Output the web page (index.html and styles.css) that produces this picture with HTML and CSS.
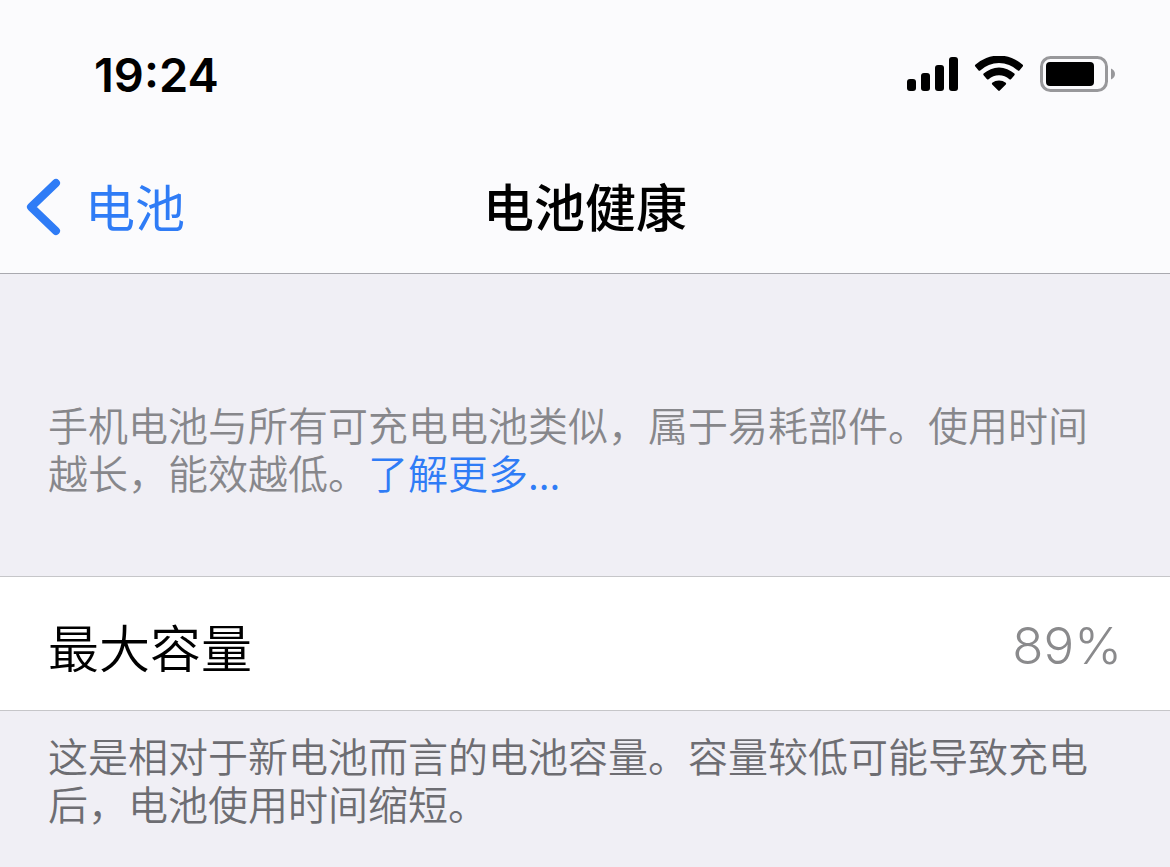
FILE: index.html
```html
<!DOCTYPE html>
<html lang="zh-CN">
	<head>
		<meta charset="utf-8">
		<meta name="viewport" content="width=device-width, initial-scale=1">
		<title>电池健康</title>
		<link rel="stylesheet" href="styles.css">
	</head>
	<body>
		<header class="header">
			<div class="status-bar">
				<time class="clock">19:24</time>
				<div class="status-icons">
					<svg width="51" height="36" viewBox="0 0 51 36" aria-label="信号">
						<rect x="0" y="23" width="9" height="12" rx="3"/>
						<rect x="14" y="17" width="9" height="18" rx="3"/>
						<rect x="28" y="9" width="9" height="26" rx="3"/>
						<rect x="42" y="1" width="9" height="34" rx="3"/>
					</svg>
					<svg width="50" height="36" viewBox="0 0 50 36" aria-label="无线局域网">
						<path d="M1.3 8.8Q0.5 9.6 1.3 10.4L4.6 14.4Q5.4 15.1 6.2 14.4A27.5 27.5 0 0 1 43.8 14.4Q44.6 15.1 45.4 14.4L48.7 10.4Q49.5 9.6 48.7 8.8A35 35 0 0 0 1.3 8.8Z"/>
						<path d="M9.6 17.6Q8.8 18.4 9.6 19.2L13 23.2Q13.8 24 14.6 23.2A15.5 15.5 0 0 1 35.4 23.2Q36.2 24 37 23.2L40.4 19.2Q41.2 18.4 40.4 17.6A22.8 22.8 0 0 0 9.6 17.6Z"/>
						<path d="M18.2 26.8Q17.4 27.7 18.2 28.5L24.2 34.6Q25 35.3 25.8 34.6L31.8 28.5Q32.6 27.7 31.8 26.8A10.8 10.8 0 0 0 18.2 26.8Z"/>
					</svg>
					<svg width="76" height="36" viewBox="0 0 76 36" aria-label="电量">
						<rect class="battery-case" x="1.5" y="1.5" width="65" height="33" rx="9"/>
						<rect x="6" y="6" width="48" height="24" rx="4"/>
						<path class="battery-tip" d="M71 12.5C73.5 13.5 75 15.5 75 18S73.5 22.5 71 23.5Z"/>
					</svg>
				</div>
			</div>
			<nav class="nav-bar">
				<a class="back" href="#">
					<svg width="38" height="58" viewBox="0 0 38 58" aria-hidden="true">
						<path d="M32 3L7 27L32 51"/>
					</svg>
					电池
				</a>
				<h1 class="title">电池健康</h1>
			</nav>
		</header>
		<main>
			<p class="note intro">手机电池与所有可充电电池类似，属于易耗部件。使用时间越长，能效越低。<a href="#">了解更多...</a></p>
			<dl class="row">
				<dt>最大容量</dt>
				<dd>89%</dd>
			</dl>
			<p class="note footnote">这是相对于新电池而言的电池容量。容量较低可能导致充电后，电池使用时间缩短。</p>
		</main>
	</body>
</html>
```

FILE: styles.css
```css
* {
	box-sizing: border-box;
}
body {
	margin: 0;
	background-color: #f0eff5;
	font-family: Inter, "Noto Sans CJK SC", sans-serif;
	color: #000;
}
a {
	color: #2f7cf6;
	text-decoration: none;
}
svg {
	display: block;
}
.header {
	background-color: #fbfbfd;
	border-bottom: 1px solid #a9a9af;
}
.status-bar {
	display: flex;
	justify-content: space-between;
	align-items: center;
	height: 148px;
	padding: 0 54px 0 94px;
}
.clock {
	font-size: 47px;
	font-weight: 600;
}
.status-icons {
	display: flex;
	gap: 16px;
}
.battery-case {
	fill: none;
	stroke: #98989b;
	stroke-width: 3;
}
.battery-tip {
	fill: #98989b;
}
.nav-bar {
	display: grid;
	grid-template-columns: 1fr auto 1fr;
	align-items: center;
	height: 125px;
	padding: 0 24px 4px;
}
.back {
	display: flex;
	align-items: center;
	gap: 23px;
	font-size: 50px;
	line-height: 60px;
}
.back path {
	fill: none;
	stroke: #2f7cf6;
	stroke-width: 8;
	stroke-linecap: round;
	stroke-linejoin: round;
}
.back svg {
	overflow: visible;
}
.title {
	margin: 0;
	font-size: 51px;
	font-weight: 500;
	line-height: 60px;
}
.note {
	margin: 0;
	padding: 0 48px;
	font-family: "Noto Sans CJK SC", sans-serif;
	font-size: 40px;
	font-weight: 350;
	line-height: 48px;
}
.intro {
	padding-top: 126px;
	padding-bottom: 80px;
	color: #87878b;
}
.row {
	display: flex;
	justify-content: space-between;
	align-items: center;
	height: 135px;
	margin: 0;
	padding: 4px 48px 0;
	background-color: #fff;
	border-top: 1px solid #c6c6c9;
	border-bottom: 1px solid #c6c6c9;
	font-size: 51px;
	font-weight: 350;
}
.row dd {
	margin: 0;
	color: #8a8a8c;
}
.footnote {
	padding-top: 20px;
	padding-bottom: 36px;
	color: #6d6d72;
}
```
